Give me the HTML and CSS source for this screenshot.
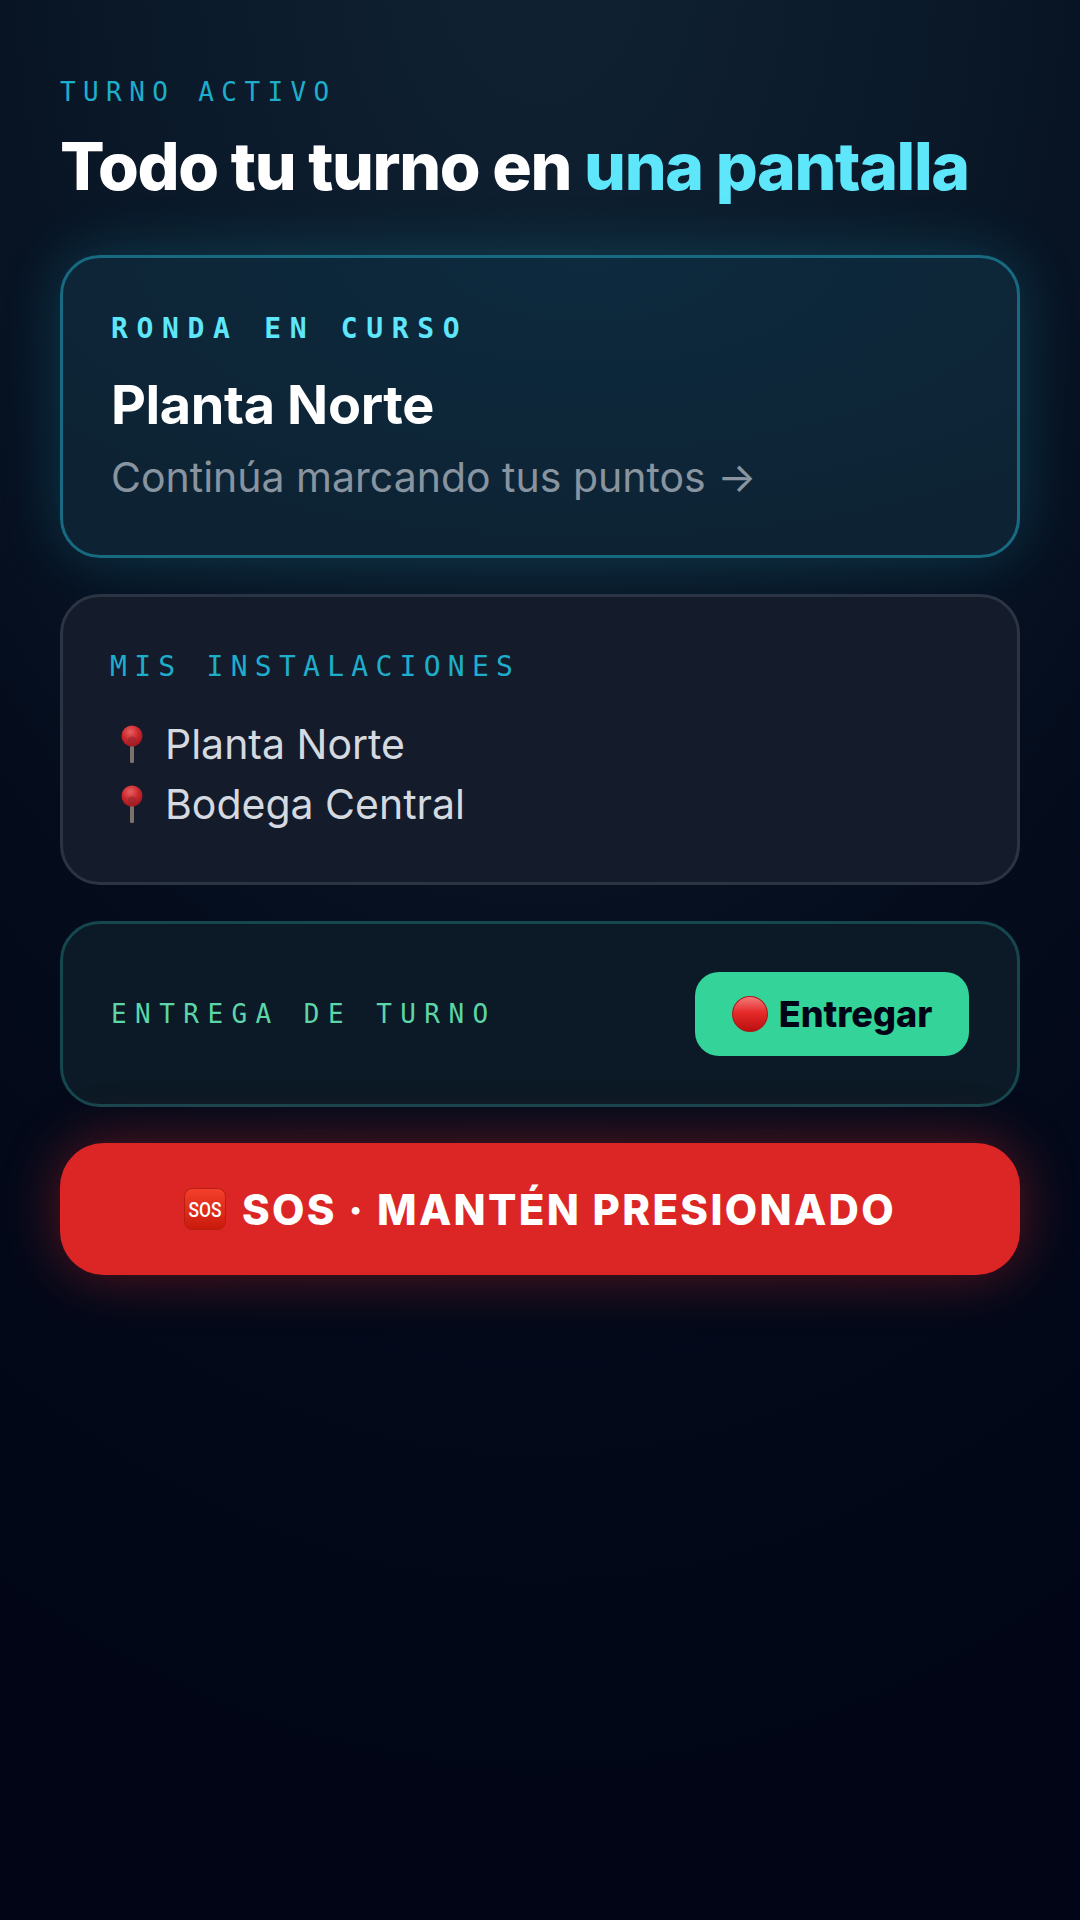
FILE: index.html
```html
<!DOCTYPE html>
<html lang="es">
<head>
    <meta charset="UTF-8">
    <title>Turno activo</title>
    <link rel="stylesheet" href="styles.css">
</head>
<body>
    <svg class="defs" width="0" height="0" aria-hidden="true">
        <defs>
            <radialGradient id="pinBall" cx="0.42" cy="0.3" r="0.75">
                <stop offset="0" stop-color="#e8605f"/>
                <stop offset="0.55" stop-color="#c9252b"/>
                <stop offset="1" stop-color="#98161c"/>
            </radialGradient>
            <linearGradient id="dotFill" x1="0" y1="0" x2="0" y2="1">
                <stop offset="0" stop-color="#f37a7a"/>
                <stop offset="0.45" stop-color="#e62a2a"/>
                <stop offset="1" stop-color="#bb1010"/>
            </linearGradient>
            <linearGradient id="sosFill" x1="0" y1="0" x2="0" y2="1">
                <stop offset="0" stop-color="#f4402c"/>
                <stop offset="1" stop-color="#c91a0c"/>
            </linearGradient>
        </defs>
    </svg>
    <main class="screen">
        <header class="head">
            <div class="eyebrow">TURNO ACTIVO</div>
            <h1>Todo tu turno en <span class="accent">una pantalla</span></h1>
        </header>
        <section class="card card-round">
            <div class="label label-round">RONDA EN CURSO</div>
            <div class="round-name">Planta Norte</div>
            <div class="round-hint">Continúa marcando tus puntos →</div>
        </section>
        <section class="card card-sites">
            <div class="label label-sites">MIS INSTALACIONES</div>
            <ul class="sites">
                <li>
                    <svg class="pin" width="22" height="38" viewBox="0 0 22 38"><rect x="9" y="18" width="4" height="20" rx="1.5" fill="#7d726b"/><circle cx="11" cy="11" r="10.5" fill="url(#pinBall)"/><ellipse cx="11" cy="15" rx="4" ry="3.5" fill="#8f2a2e" opacity="0.6"/></svg>
                    Planta Norte
                </li>
                <li>
                    <svg class="pin" width="22" height="38" viewBox="0 0 22 38"><rect x="9" y="18" width="4" height="20" rx="1.5" fill="#7d726b"/><circle cx="11" cy="11" r="10.5" fill="url(#pinBall)"/><ellipse cx="11" cy="15" rx="4" ry="3.5" fill="#8f2a2e" opacity="0.6"/></svg>
                    Bodega Central
                </li>
            </ul>
        </section>
        <section class="card card-handover">
            <div class="label label-handover">ENTREGA DE TURNO</div>
            <button class="handover-btn">
                <svg width="36" height="36" viewBox="0 0 36 36"><circle cx="18" cy="18" r="18" fill="#a81818"/><circle cx="18" cy="18" r="17" fill="url(#dotFill)"/></svg>
                Entregar
            </button>
        </section>
        <button class="sos-btn">
            <svg width="42" height="42" viewBox="0 0 42 42"><rect x="0.5" y="0.5" width="41" height="41" rx="8" fill="url(#sosFill)" stroke="#b5200f"/><text class="sos-mark" x="4.5" y="28.5" textLength="33" lengthAdjust="spacingAndGlyphs">SOS</text></svg>
            SOS · MANTÉN PRESIONADO
        </button>
    </main>
</body>
</html>
```

FILE: styles.css
```css
html, body { margin: 0; height: 100%; }
body {
    font-family: Inter, "Noto Sans", sans-serif;
    color: #fff;
    background: radial-gradient(ellipse 1300px 1950px at 50% -60px, #102232 0%, #0b1a2a 28%, #040b1b 62%, #010516 100%), #010516;
}
.defs { position: absolute; }
.screen { display: flex; flex-direction: column; gap: 36px; padding: 77px 60px 0; }
.head { margin-bottom: 15px; }
.eyebrow, .label { font-family: "DejaVu Sans Mono", monospace; line-height: 30px; }
.eyebrow { font-size: 26px; color: #1eaecb; letter-spacing: 7.4px; }
h1 { margin: 21px 0 0; font-size: 66px; line-height: 76px; font-weight: 800; letter-spacing: -0.021em; }
.accent { color: #5ee6fa; }
.card { box-sizing: border-box; border-radius: 40px; border: 3px solid; }
.card-round {
    height: 303px;
    padding: 56px 48px;
    background: radial-gradient(ellipse 700px 300px at 55% 0, #0d2a3e, #0d2334);
    border-color: #176a80;
    box-shadow: 0 0 60px rgba(34, 211, 238, 0.2);
}
.label-round { font-size: 28px; color: #5ee6fa; font-weight: 700; letter-spacing: 8.67px; }
.round-name { margin-top: 29px; font-size: 54px; line-height: 64px; font-weight: 700; letter-spacing: -0.007em; }
.round-hint { margin-top: 12px; font-size: 41px; line-height: 56px; color: #88949f; }
.card-sites { height: 291px; padding: 55px 47px; background: #141c2b; border-color: #2a3443; }
.label-sites { font-size: 28px; color: #1eaecb; letter-spacing: 7.27px; }
.sites { list-style: none; margin: 32px 0 0; padding: 0; font-size: 41px; line-height: 60px; color: #d5d9e0; }
.sites li { display: flex; align-items: center; gap: 22px; }
.pin { margin-left: 11px; }
.card-handover {
    height: 186px;
    display: flex;
    align-items: center;
    justify-content: space-between;
    padding: 0 48px;
    background: #0b1a26;
    border-color: #15474f;
}
.label-handover { font-size: 26px; color: #5dd5a8; letter-spacing: 8.45px; }
button { font-family: inherit; border: 0; padding: 0; display: flex; align-items: center; justify-content: center; }
.handover-btn { gap: 11px; width: 274px; height: 84px; border-radius: 24px; background: #34d399; color: #020416; font-size: 36px; font-weight: 800; }
.sos-btn {
    gap: 16px;
    height: 132px;
    border-radius: 44px;
    background: #dc2626;
    color: #fff;
    font-size: 42px;
    font-weight: 800;
    letter-spacing: 0.055em;
    box-shadow: 0 0 55px rgba(220, 38, 38, 0.42);
}
.sos-mark { font-family: Roboto, sans-serif; font-size: 20px; font-weight: 500; letter-spacing: 0; fill: #fff; }
```
